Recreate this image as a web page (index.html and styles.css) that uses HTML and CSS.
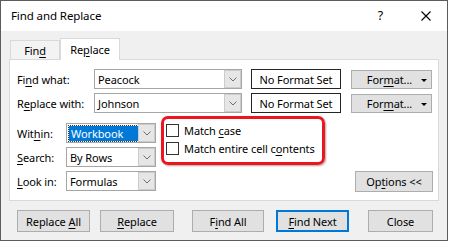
FILE: index.html
```html
<!DOCTYPE html>
<html>
<head>
<meta charset="utf-8">
<title>Find and Replace</title>
<link rel="stylesheet" href="styles.css">
</head>
<body>
<div class="window">
  <div class="titlebar">
    <span class="title">Find and Replace</span>
    <span class="help">?</span>
    <svg class="close-x" width="10" height="10" viewBox="0 0 10 10"><path d="M0.5 0.5L9.5 9.5M9.5 0.5L0.5 9.5" stroke="#000" stroke-width="1.1" fill="none"/></svg>
  </div>
  <div class="body">
    <div class="tabs">
      <div class="tab"><span>Fin<u>d</u></span></div>
      <div class="tab active"><span>Re<u>p</u>lace</span></div>
    </div>
    <div class="panel">
      <div class="row">
        <span class="lbl">Fi<u>n</u>d what:</span>
        <div class="combo wide"><span class="val">Peacock</span><span class="arrow"><svg width="8" height="5" viewBox="0 0 8 5"><path d="M0.5 0.5L4 4L7.5 0.5" stroke="#6d6d6d" fill="none"/></svg></span></div>
        <div class="fmtbox"><span>No Format Set</span></div>
        <div class="btn fmt"><span>For<u>m</u>at...</span><span class="tri"></span></div>
      </div>
      <div class="row">
        <span class="lbl">R<u>e</u>place with:</span>
        <div class="combo wide"><span class="val">Johnson</span><span class="arrow"><svg width="8" height="5" viewBox="0 0 8 5"><path d="M0.5 0.5L4 4L7.5 0.5" stroke="#6d6d6d" fill="none"/></svg></span></div>
        <div class="fmtbox"><span>No Format Set</span></div>
        <div class="btn fmt"><span>For<u>m</u>at...</span><span class="tri"></span></div>
      </div>
      <div class="lower">
        <div class="opts">
          <span class="lbl short">Wit<u>h</u>in:</span>
          <div class="combo narrow"><span class="val"><span class="sel">Workbook</span></span><span class="arrow"><svg width="8" height="5" viewBox="0 0 8 5"><path d="M0.5 0.5L4 4L7.5 0.5" stroke="#6d6d6d" fill="none"/></svg></span></div>
          <span class="lbl short"><u>S</u>earch:</span>
          <div class="combo narrow"><span class="val">By Rows</span><span class="arrow"><svg width="8" height="5" viewBox="0 0 8 5"><path d="M0.5 0.5L4 4L7.5 0.5" stroke="#6d6d6d" fill="none"/></svg></span></div>
          <span class="lbl short"><u>L</u>ook in:</span>
          <div class="combo narrow"><span class="val">Formulas</span><span class="arrow"><svg width="8" height="5" viewBox="0 0 8 5"><path d="M0.5 0.5L4 4L7.5 0.5" stroke="#6d6d6d" fill="none"/></svg></span></div>
        </div>
        <div class="checks">
          <div class="check"><span class="box"></span><span>Match <u>c</u>ase</span></div>
          <div class="check"><span class="box"></span><span>Match entire cell c<u>o</u>ntents</span></div>
        </div>
        <div class="btn options"><span>Op<u>t</u>ions &lt;&lt;</span></div>
      </div>
    </div>
    <div class="actions">
      <div class="btn act replace-all"><span>Replace <u>A</u>ll</span></div>
      <div class="btn act replace"><span><u>R</u>eplace</span></div>
      <div class="btn act find-all"><span>F<u>i</u>nd All</span></div>
      <div class="btn act find-next"><span><u>F</u>ind Next</span></div>
      <div class="btn act close"><span>Close</span></div>
    </div>
  </div>
</div>
</body>
</html>
```

FILE: styles.css
```css
* { box-sizing: border-box; }
html, body { margin: 0; padding: 0; background: #fff; }
body {
  font-family: "Noto Sans", "Liberation Sans", sans-serif;
  font-size: 11px;
  letter-spacing: -0.1px;
  color: #000;
  line-height: 1;
  white-space: nowrap;
}
u { text-decoration-thickness: 1px; text-underline-offset: 2px; }

.window {
  width: 448px;
  height: 241px;
  border: 1px solid #5c5c5c;
  background: #f0f0f0;
  display: flex;
  flex-direction: column;
}

.titlebar {
  flex: none;
  height: 30px;
  background: #fff;
  display: flex;
  align-items: center;
  padding-left: 10px;
}
.title { font-size: 11.5px; }
.help { margin-left: auto; font-size: 12.5px; }
.close-x { margin-left: 38px; margin-right: 16px; }

.body { flex: 1; padding: 7px 0 0 8px; }

.tabs {
  display: flex;
  align-items: flex-end;
  height: 21px;
  padding-left: 1px;
}
.tab {
  width: 50px;
  height: 19px;
  border: 1px solid #d9d9d9;
  border-bottom: none;
  background: #f3f3f3;
  display: flex;
  align-items: center;
  justify-content: center;
  padding-top: 1px;
}
.tab.active {
  width: 60px;
  height: 22px;
  background: #fff;
  margin-bottom: -1px;
  position: relative;
  z-index: 1;
  padding-top: 0;
  padding-bottom: 1px;
}

.panel {
  width: 430px;
  height: 142px;
  border: 1px solid #d9d9d9;
  background: #fff;
  padding: 9px 5px 0 7px;
}

.row {
  display: flex;
  align-items: center;
  height: 20px;
  margin-bottom: 4px;
}
.lbl { width: 77px; flex: none; }
.lbl.short { width: 49px; }

.combo {
  flex: none;
  height: 20px;
  border: 1px solid #a6a6a6;
  background: #fff;
  display: flex;
  align-items: stretch;
}
.combo.wide { width: 148px; }
.combo.narrow { width: 90px; }
.val {
  flex: 1;
  display: flex;
  align-items: center;
  padding-left: 3px;
}
.sel {
  background: #0078d7;
  color: #fff;
  outline: 1px dotted #3a3a3a;
  padding: 2px 3px 2px 2px;
  margin-left: -1px;
  width: 69px;
}
.arrow {
  width: 17px;
  flex: none;
  background: #e6e6e6;
  border: 1px solid #cccccc;
  display: flex;
  align-items: center;
  justify-content: center;
}

.fmtbox {
  flex: none;
  margin-left: 9px;
  width: 90px;
  height: 20px;
  border: 1px solid #262626;
  display: flex;
  align-items: center;
  justify-content: center;
}

.btn {
  flex: none;
  background: #e1e1e1;
  border: 1px solid #adadad;
  display: flex;
  align-items: center;
  justify-content: center;
}
.fmt {
  margin-left: 10px;
  width: 81px;
  height: 19px;
  position: relative;
  padding-right: 4px;
}
.tri {
  position: absolute;
  right: 4px;
  top: 8px;
  width: 0;
  height: 0;
  border-left: 3px solid transparent;
  border-right: 3px solid transparent;
  border-top: 3px solid #000;
}

.lower {
  display: flex;
  align-items: flex-start;
  margin-top: -1px;
  height: 76px;
}
.opts {
  margin-top: 7px;
  display: grid;
  grid-template-columns: 49px 90px;
  grid-auto-rows: 20px;
  row-gap: 4px;
  align-items: center;
}
.checks {
  margin-left: 5px;
  width: 164px;
  height: 49px;
  border: 3px solid #ef1520;
  border-radius: 7px;
  box-shadow: 1px 1px 2px rgba(0,0,0,0.35);
  padding: 5px 0 0 2px;
  display: flex;
  flex-direction: column;
  gap: 5px;
}
.check {
  display: flex;
  align-items: center;
  height: 13px;
}
.box {
  width: 13px;
  height: 13px;
  border: 1px solid #333;
  background: #fff;
  margin-right: 5px;
  flex: none;
}
.options {
  margin-left: auto;
  align-self: flex-end;
  width: 78px;
  height: 21px;
}

.actions {
  display: flex;
  margin-top: 9px;
  padding-left: 8px;
}
.act { height: 22px; }
.replace-all { width: 73px; }
.replace { width: 74px; margin-left: 10px; }
.find-all { width: 72px; margin-left: 18px; }
.find-next { width: 73px; margin-left: 12px; border: 2px solid #0078d7; }
.close { width: 65px; margin-left: 19px; }
```
